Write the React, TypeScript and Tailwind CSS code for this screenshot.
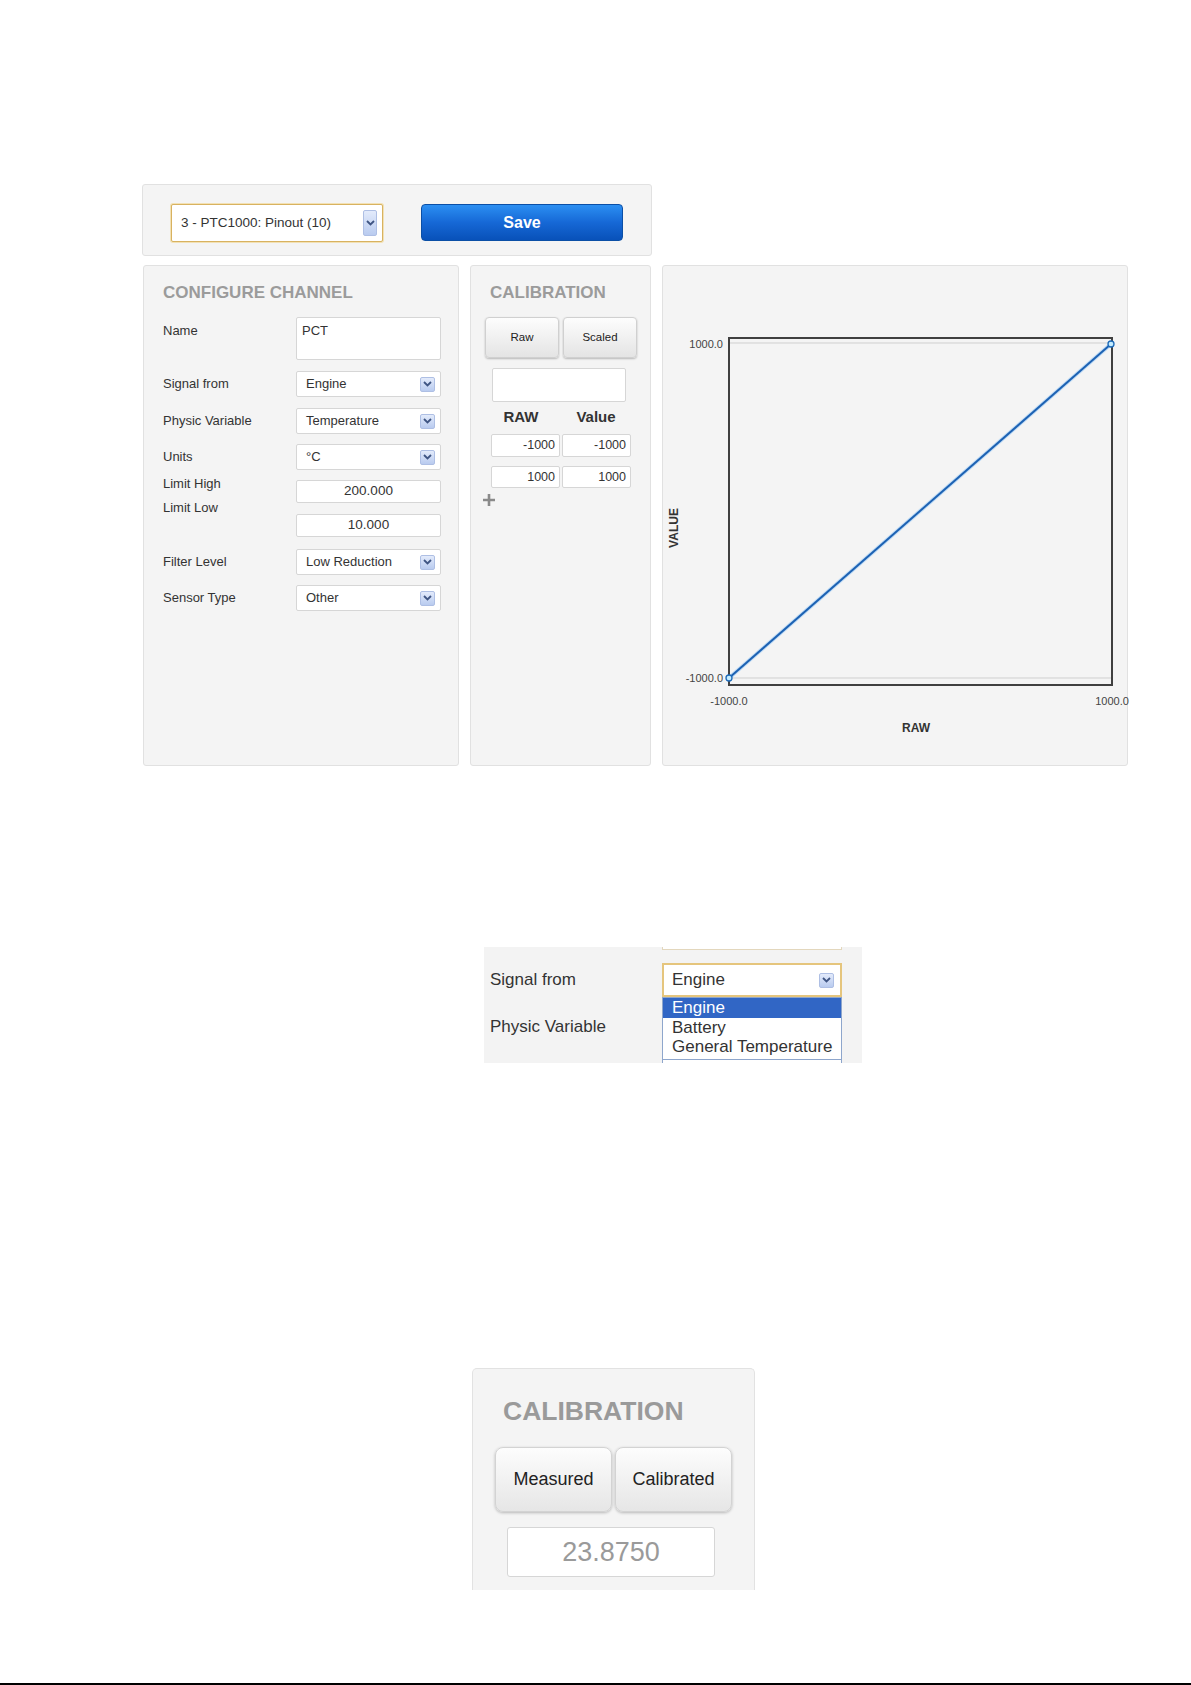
import React from "react"

const font = "font-['Liberation_Sans',Arial,sans-serif]"

function ArrowBox({ tall }: { tall?: boolean }) {
    return (
        <div className={`shrink-0 flex items-center justify-center rounded-[2px] border border-[#aebfe4] bg-gradient-to-b from-[#e3ebfb] to-[#b9cbef] ${tall ? "w-[14px] h-[26px]" : "w-[15px] h-[15px]"}`}>
            <svg width="9" height="6" viewBox="0 0 9 6">
                <path d="M1 1 L4.5 4.5 L8 1" stroke="#3f5583" strokeWidth="1.8" fill="none" />
            </svg>
        </div>
    )
}

function Select({ value }: { value: string }) {
    return (
        <div className="w-[145px] h-[26px] flex items-center justify-between bg-white border border-[#d6d6d6] rounded-[2px] pl-[9px] pr-[5px]">
            <span className="text-[13px] text-[#333]">{value}</span>
            <ArrowBox />
        </div>
    )
}

function SoftButton({ label }: { label: string }) {
    return (
        <button className="w-[74px] h-[41px] rounded-[4px] border border-[#d0d0d0] bg-gradient-to-b from-[#fdfdfd] to-[#e4e4e4] shadow-[0_1px_2px_rgba(0,0,0,0.25)] text-[11.5px] text-[#222]">
            {label}
        </button>
    )
}

function NumBox({ v }: { v: string }) {
    return (
        <div className="w-[69px] h-full bg-white border border-[#d6d6d6] rounded-[2px] flex items-center justify-end pr-[4px] text-[12.5px] text-[#333]">
            {v}
        </div>
    )
}

function Chart() {
    // panel coords: frame 65..450 x 71..420
    const x0 = 66, y0 = 412, x1 = 448, y1 = 78
    return (
        <svg width="464" height="499" viewBox="0 0 464 499" className="overflow-visible">
            <line x1="65" y1="77" x2="450" y2="77" stroke="#cfcfcf" strokeWidth="1" />
            <line x1="65" y1="412" x2="450" y2="412" stroke="#cfcfcf" strokeWidth="1" />
            <rect x="66" y="72" width="383" height="347" fill="none" stroke="#404040" strokeWidth="2" />
            <line x1={x0} y1={y0} x2={x1} y2={y1} stroke="#a9d1f7" strokeWidth="4" strokeOpacity="0.7" />
            <line x1={x0} y1={y0} x2={x1} y2={y1} stroke="#1d62b3" strokeWidth="2" />
            <circle cx={x0} cy={y0} r="3" fill="#c4ecff" stroke="#1d6ab8" strokeWidth="1.3" />
            <circle cx={x1} cy={y1} r="3" fill="#c4ecff" stroke="#1d6ab8" strokeWidth="1.3" />
            <text x="60" y="82" textAnchor="end" fontSize="11" fill="#444" fontFamily="Liberation Sans, Arial, sans-serif">1000.0</text>
            <text x="60" y="416" textAnchor="end" fontSize="11" fill="#444" fontFamily="Liberation Sans, Arial, sans-serif">-1000.0</text>
            <text x="66" y="439" textAnchor="middle" fontSize="11" fill="#444" fontFamily="Liberation Sans, Arial, sans-serif">-1000.0</text>
            <text x="449" y="439" textAnchor="middle" fontSize="11" fill="#444" fontFamily="Liberation Sans, Arial, sans-serif">1000.0</text>
            <text x="253" y="466" textAnchor="middle" fontSize="12" fontWeight="bold" fill="#333" fontFamily="Liberation Sans, Arial, sans-serif">RAW</text>
            <text x="15" y="262" textAnchor="middle" fontSize="12" fontWeight="bold" fill="#333" fontFamily="Liberation Sans, Arial, sans-serif" transform="rotate(-90 15 262)">VALUE</text>
        </svg>
    )
}

export default function App() {
    return (
        <div className={`w-[1191px] h-[1685px] bg-white flex flex-col items-start ${font}`}>
            {/* Top bar */}
            <div className="ml-[142px] mt-[184px] w-[510px] h-[72px] bg-[#f4f4f4] border border-[#e1e1e1] rounded-[3px] flex items-start pl-[28px] pt-[19px]">
                <div className="w-[212px] h-[38px] bg-white border border-[#d8b260] shadow-[0_0_0_1px_#f2e1b5] rounded-[2px] flex items-center justify-between pl-[9px] pr-[5px]">
                    <span className="text-[13.5px] text-[#333]">3 - PTC1000: Pinout (10)</span>
                    <ArrowBox tall />
                </div>
                <button className="ml-[38px] w-[202px] h-[37px] rounded-[4px] border border-[#0b4fa6] bg-gradient-to-b from-[#2c8ff2] via-[#1668d6] to-[#0851b9] text-white font-bold text-[16px]">
                    Save
                </button>
            </div>

            {/* Panels */}
            <div className="ml-[143px] mt-[9px] flex gap-[11px]">
                {/* Configure channel */}
                <div className="w-[316px] h-[501px] bg-[#f4f4f4] border border-[#e1e1e1] rounded-[3px] pl-[19px] pt-[18px] flex flex-col">
                    <div className="h-[18px] leading-[18px] text-[17px] font-bold text-[#9b9b9b]">CONFIGURE CHANNEL</div>

                    <div className="mt-[15px] flex items-start">
                        <div className="w-[133px] mt-[6px] leading-[16px] text-[13px] text-[#333]">Name</div>
                        <div className="w-[145px] h-[43px] bg-white border border-[#d6d6d6] rounded-[2px] pl-[5px] pt-[5px] leading-[16px] text-[13px] text-[#333]">PCT</div>
                    </div>
                    <div className="mt-[11px] flex items-center">
                        <div className="w-[133px] text-[13px] text-[#333]">Signal from</div>
                        <Select value="Engine" />
                    </div>
                    <div className="mt-[11px] flex items-center">
                        <div className="w-[133px] text-[13px] text-[#333]">Physic Variable</div>
                        <Select value="Temperature" />
                    </div>
                    <div className="mt-[10px] flex items-center">
                        <div className="w-[133px] text-[13px] text-[#333]">Units</div>
                        <Select value="°C" />
                    </div>
                    <div className="mt-[10px] flex items-start">
                        <div className="w-[133px] -mt-[4px] leading-[16px] text-[13px] text-[#333]">Limit High</div>
                        <div className="w-[145px] h-[23px] bg-white border border-[#d6d6d6] rounded-[2px] flex items-center justify-center text-[13.5px] text-[#333]">200.000</div>
                    </div>
                    <div className="mt-[11px] flex items-start">
                        <div className="w-[133px] -mt-[14px] leading-[16px] text-[13px] text-[#333]">Limit Low</div>
                        <div className="w-[145px] h-[23px] bg-white border border-[#d6d6d6] rounded-[2px] flex items-center justify-center text-[13.5px] text-[#333]">10.000</div>
                    </div>
                    <div className="mt-[12px] flex items-center">
                        <div className="w-[133px] text-[13px] text-[#333]">Filter Level</div>
                        <Select value="Low Reduction" />
                    </div>
                    <div className="mt-[10px] flex items-center">
                        <div className="w-[133px] text-[13px] text-[#333]">Sensor Type</div>
                        <Select value="Other" />
                    </div>
                </div>

                {/* Calibration */}
                <div className="w-[181px] h-[501px] bg-[#f4f4f4] border border-[#e1e1e1] rounded-[3px] pl-[14px] pt-[18px] flex flex-col">
                    <div className="pl-[5px] h-[18px] leading-[18px] text-[17px] font-bold text-[#9b9b9b]">CALIBRATION</div>
                    <div className="mt-[15px] flex gap-[4px]">
                        <SoftButton label="Raw" />
                        <SoftButton label="Scaled" />
                    </div>
                    <div className="ml-[7px] mt-[10px] w-[134px] h-[34px] bg-white border border-[#d6d6d6] rounded-[2px]" />
                    <div className="ml-[6px] mt-[6px] w-[140px] h-[18px] grid grid-cols-2 text-[15px] font-bold text-[#333] leading-[18px]">
                        <div className="text-center pr-[10px]">RAW</div>
                        <div className="text-center">Value</div>
                    </div>
                    <div className="ml-[6px] mt-[8px] h-[23px] flex gap-[2px]">
                        <NumBox v="-1000" />
                        <NumBox v="-1000" />
                    </div>
                    <div className="ml-[6px] mt-[9px] h-[22px] flex gap-[2px]">
                        <NumBox v="1000" />
                        <NumBox v="1000" />
                    </div>
                    <svg className="-ml-[3px] mt-[5px]" width="14" height="14" viewBox="0 0 14 14">
                        <path d="M7 1 V13 M1 7 H13" stroke="#8a8a8a" strokeWidth="2.6" />
                    </svg>
                </div>

                {/* Chart */}
                <div className="w-[466px] h-[501px] bg-[#f4f4f4] border border-[#e1e1e1] rounded-[3px]">
                    <Chart />
                </div>
            </div>

            {/* Dropdown detail */}
            <div className="ml-[484px] mt-[181px] w-[378px] h-[116px] shrink-0 bg-[#f3f3f3] overflow-hidden flex items-start">
                <div className="w-[178px] shrink-0 pl-[6px] pt-[23px] flex flex-col text-[17px] leading-[20px] text-[#333]">
                    <div>Signal from</div>
                    <div className="mt-[27px]">Physic Variable</div>
                </div>
                <div className="w-[180px] shrink-0 flex flex-col">
                    <div className="h-[3px] shrink-0 bg-white border-x border-b border-[#e3d7bd]" />
                    <div className="mt-[13px] h-[34px] shrink-0 bg-white border-2 border-[#e5c57d] flex items-center justify-between pl-[8px] pr-[6px]">
                        <span className="text-[17px] text-[#333]">Engine</span>
                        <ArrowBox />
                    </div>
                    <div className="h-[80px] shrink-0 bg-white border-x border-t border-[#8ea6cc] flex flex-col text-[17px] leading-[19px] text-[#333]">
                        <div className="h-[20px] shrink-0 bg-[#3166c5] text-white pl-[9px]">Engine</div>
                        <div className="h-[19px] shrink-0 pl-[9px]">Battery</div>
                        <div className="h-[19px] shrink-0 pl-[9px]">General Temperature</div>
                        <div className="mt-[3px] border-t border-[#8ea6cc]" />
                    </div>
                </div>
            </div>

            {/* Calibration detail */}
            <div className="ml-[472px] mt-[305px] w-[283px] h-[222px] shrink-0 bg-[#f4f4f4] border-x border-t border-[#e2e2e2] rounded-t-[5px] pl-[22px] pt-[27px] flex flex-col">
                <div className="pl-[8px] h-[30px] leading-[30px] text-[26.5px] font-bold text-[#9a9a9a]">CALIBRATION</div>
                <div className="mt-[21px] flex gap-[3px]">
                    <button className="w-[117px] h-[65px] rounded-[8px] border border-[#d3d3d3] bg-gradient-to-b from-[#fdfdfd] to-[#e6e6e6] shadow-[0_1px_3px_rgba(0,0,0,0.25)] text-[18px] text-[#222]">Measured</button>
                    <button className="w-[117px] h-[65px] rounded-[8px] border border-[#d3d3d3] bg-gradient-to-b from-[#fdfdfd] to-[#e6e6e6] shadow-[0_1px_3px_rgba(0,0,0,0.25)] text-[18px] text-[#222]">Calibrated</button>
                </div>
                <div className="ml-[12px] mt-[15px] w-[208px] h-[50px] bg-white border border-[#d6d6d6] rounded-[3px] flex items-center justify-center text-[27px] text-[#9a9a9a]">
                    23.8750
                </div>
            </div>

            <div className="mt-auto w-full h-[2px] bg-black" />
        </div>
    )
}
